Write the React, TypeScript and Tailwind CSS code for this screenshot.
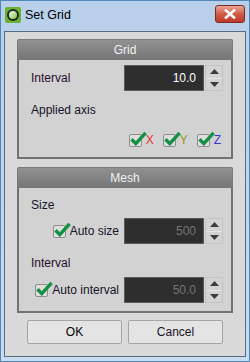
import React from "react";

const font = { fontFamily: '"Liberation Sans", Arial, sans-serif' };

function Check() {
  return (
    <span className="relative block h-[13px] w-[13px] shrink-0 rounded-[2px] border border-[#8e8e8e] bg-[#dedede]">
      <svg className="absolute -top-[4px] left-[0px]" width="17" height="15" viewBox="0 0 17 15">
        <path d="M1.5 8.2 L5.8 12.6 L15.6 1.8" fill="none" stroke="#139043" strokeWidth="3.4" />
      </svg>
    </span>
  );
}

function Spin({ value, dim = false }: { value: string; dim?: boolean }) {
  return (
    <div className="flex h-[26px] shrink-0 items-stretch">
      <div
        className={`flex w-[80px] items-center justify-end border border-[#5a5a5a] bg-[#2e2e2e] pr-[7px] text-[12px] leading-[14px] ${dim ? "text-[#747474]" : "text-white"}`}
      >
        {value}
      </div>
      <div className="ml-px flex w-[18px] flex-col border border-[#c4c4c4] bg-[#d3d3d3]">
        <div className="flex flex-1 items-center justify-center border-b border-[#e4e4e4]">
          <svg width="9" height="5" viewBox="0 0 9 5"><path d="M4.5 0 L9 5 L0 5 Z" fill="#3c3c3c" /></svg>
        </div>
        <div className="flex flex-1 items-center justify-center">
          <svg width="9" height="5" viewBox="0 0 9 5"><path d="M0 0 L9 0 L4.5 5 Z" fill="#3c3c3c" /></svg>
        </div>
      </div>
    </div>
  );
}

function Panel({ title, height, children }: { title: string; height: string; children: React.ReactNode }) {
  return (
    <div className="flex shrink-0 flex-col">
      <div className="flex h-[21px] shrink-0 items-center justify-center rounded-t-[2px] border border-b-0 border-[#7a7a7a] bg-gradient-to-b from-[#919191] to-[#767676] text-[12px] leading-[14px] text-[#f2f2f2]">
        {title}
      </div>
      <div className={`flex flex-col overflow-hidden border-2 border-t-0 border-[#727272] bg-[#d2d2d2] pl-[12px] pr-[8px] text-[12px] leading-[14px] ${height}`}>
        {children}
      </div>
    </div>
  );
}

export default function App() {
  return (
    <div style={font} className="flex h-[362px] w-[250px] flex-col overflow-hidden border border-[#4f88b8] bg-gradient-to-b from-[#b8d0ea] to-[#c8dbef]">
      <div className="flex h-[30px] shrink-0 items-start">
        <div className="ml-[4px] mt-[6px] flex h-[16px] w-[16px] items-center justify-center rounded-[2px] bg-[#6bb234]">
          <div className="flex h-[12px] w-[12px] items-center justify-center rounded-full bg-[#1f2a1a]">
            <div className="h-[8px] w-[8px] rounded-full bg-gradient-to-br from-[#f4fbe8] to-[#7ec64a]" />
          </div>
        </div>
        <span className="ml-[4px] mt-[6px] text-[12.5px] leading-[16px] text-black">Set Grid</span>
        <div className="ml-auto mr-[4px] mt-[4px] flex h-[18px] w-[30px] items-center justify-center rounded-[3px] border border-[#7d2a22] bg-gradient-to-b from-[#e9a597] via-[#cf5b45] to-[#c0392b]">
          <svg width="12" height="10" viewBox="0 0 12 10">
            <path d="M2 1.5 L10 8.5 M10 1.5 L2 8.5" stroke="#ffffff" strokeWidth="2.6" strokeLinecap="square" />
          </svg>
        </div>
      </div>
      <div className="mx-[3px] mb-[4px] flex min-h-0 flex-1 flex-col border border-[#5b6b7e] bg-[#d9d9d9] px-[12px] pt-[7px]">
        <Panel title="Grid" height="h-[99px]">
          <div className="mt-[5px] flex h-[26px] items-center justify-between">
            <span className="text-[#2a0c2e]">Interval</span>
            <Spin value="10.0" />
          </div>
          <div className="mt-[12px] flex h-[14px] items-center text-[#141428]">Applied axis</div>
          <div className="mt-[16px] flex h-[14px] items-center justify-end gap-[4px] pr-[2px]">
            <Check />
            <span className="mr-[5px] text-[#e4322b]">X</span>
            <Check />
            <span className="mr-[5px] text-[#8f9a14]">Y</span>
            <Check />
            <span className="text-[#3a35d8]">Z</span>
          </div>
        </Panel>
        <div className="h-[8px] shrink-0" />
        <Panel title="Mesh" height="h-[125px]">
          <div className="mt-[10px] flex h-[14px] items-center text-[#141428]">Size</div>
          <div className="mt-[6px] flex h-[26px] items-center justify-end">
            <Check />
            <span className="ml-[4px] mr-[5px] text-[#141428]">Auto size</span>
            <Spin value="500" dim />
          </div>
          <div className="mt-[12px] flex h-[14px] items-center text-[#2a0c2e]">Interval</div>
          <div className="mt-[7px] flex h-[26px] items-center justify-end">
            <Check />
            <span className="ml-[4px] mr-[5px] text-[#141428]">Auto interval</span>
            <Spin value="50.0" dim />
          </div>
        </Panel>
        <div className="mt-[7px] flex shrink-0 gap-[6px] px-[10px]">
          <button className="h-[24px] w-[100px] rounded-[2px] border border-[#a6a6a6] bg-[#e4e4e4] text-[12px] leading-[14px] text-black">OK</button>
          <button className="h-[24px] w-[100px] rounded-[2px] border border-[#a6a6a6] bg-[#e4e4e4] text-[12px] leading-[14px] text-[#141428]">Cancel</button>
        </div>
      </div>
    </div>
  );
}
